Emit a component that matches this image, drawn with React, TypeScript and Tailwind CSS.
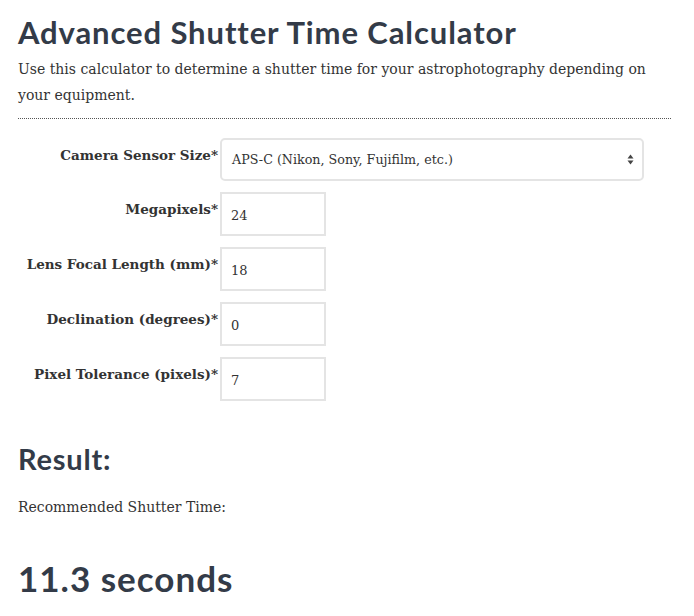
import React from 'react';

const fields = [
    { label: 'Megapixels*', value: '24' },
    { label: 'Lens Focal Length (mm)*', value: '18' },
    { label: 'Declination (degrees)*', value: '0' },
    { label: 'Pixel Tolerance (pixels)*', value: '7' },
];

const serif = "font-['DejaVu_Serif',serif]";
const heading = "font-['Lato',sans-serif] font-bold text-[#333b48]";

function App() {
    return (
        <div className={`bg-white min-h-[616px] px-[18px] pt-[12px] text-[#333] ${serif}`}>
            {/* Title */}
            <h1 className={`${heading} text-[31px] leading-[40px] tracking-[0.9px]`}>
                Advanced Shutter Time Calculator
            </h1>
            <p className="text-[14px] leading-[26px] mt-[4px]">
                Use this calculator to determine a shutter time for your astrophotography depending on your equipment.
            </p>
            <hr className="mt-[10px] border-0 border-t border-dotted border-[#555] w-[653px]" />

            {/* Form */}
            <div className="flex flex-col gap-[11px] mt-[19px]">
                <div className="flex items-start">
                    <label className="w-[200px] text-right font-bold text-[13.5px] pt-[7px]">
                        Camera Sensor Size*
                    </label>
                    <div className="ml-[2px] w-[424px] h-[43px] border-2 border-[#e4e4e4] rounded-[5px] flex items-center justify-between pl-[10px] pr-[8px]">
                        <span className="text-[12.7px]">APS-C (Nikon, Sony, Fujifilm, etc.)</span>
                        <svg width="7" height="11" viewBox="0 0 7 11" className="text-[#444]">
                            <path d="M3.5 0.5 L6.5 4.5 H0.5 Z" fill="currentColor" />
                            <path d="M3.5 10.5 L6.5 6.5 H0.5 Z" fill="currentColor" />
                        </svg>
                    </div>
                </div>
                {fields.map(f => (
                    <div key={f.label} className="flex items-start">
                        <label className="w-[200px] text-right font-bold text-[13.5px] pt-[7px] whitespace-nowrap">
                            {f.label}
                        </label>
                        <div className="ml-[2px] w-[106px] h-[44px] border-2 border-[#e4e4e4] flex items-center pl-[9px] pt-[4px]">
                            <span className="text-[13px]">{f.value}</span>
                        </div>
                    </div>
                ))}
            </div>

            {/* Result */}
            <h2 className={`${heading} text-[29px] leading-[36px] mt-[40px] tracking-[0.8px]`}>Result:</h2>
            <p className="text-[14px] mt-[20px]">Recommended Shutter Time:</p>
            <h2 className={`${heading} text-[35px] leading-[44px] mt-[38px] tracking-[1px]`}>11.3 seconds</h2>
        </div>
    );
}

export default App;
